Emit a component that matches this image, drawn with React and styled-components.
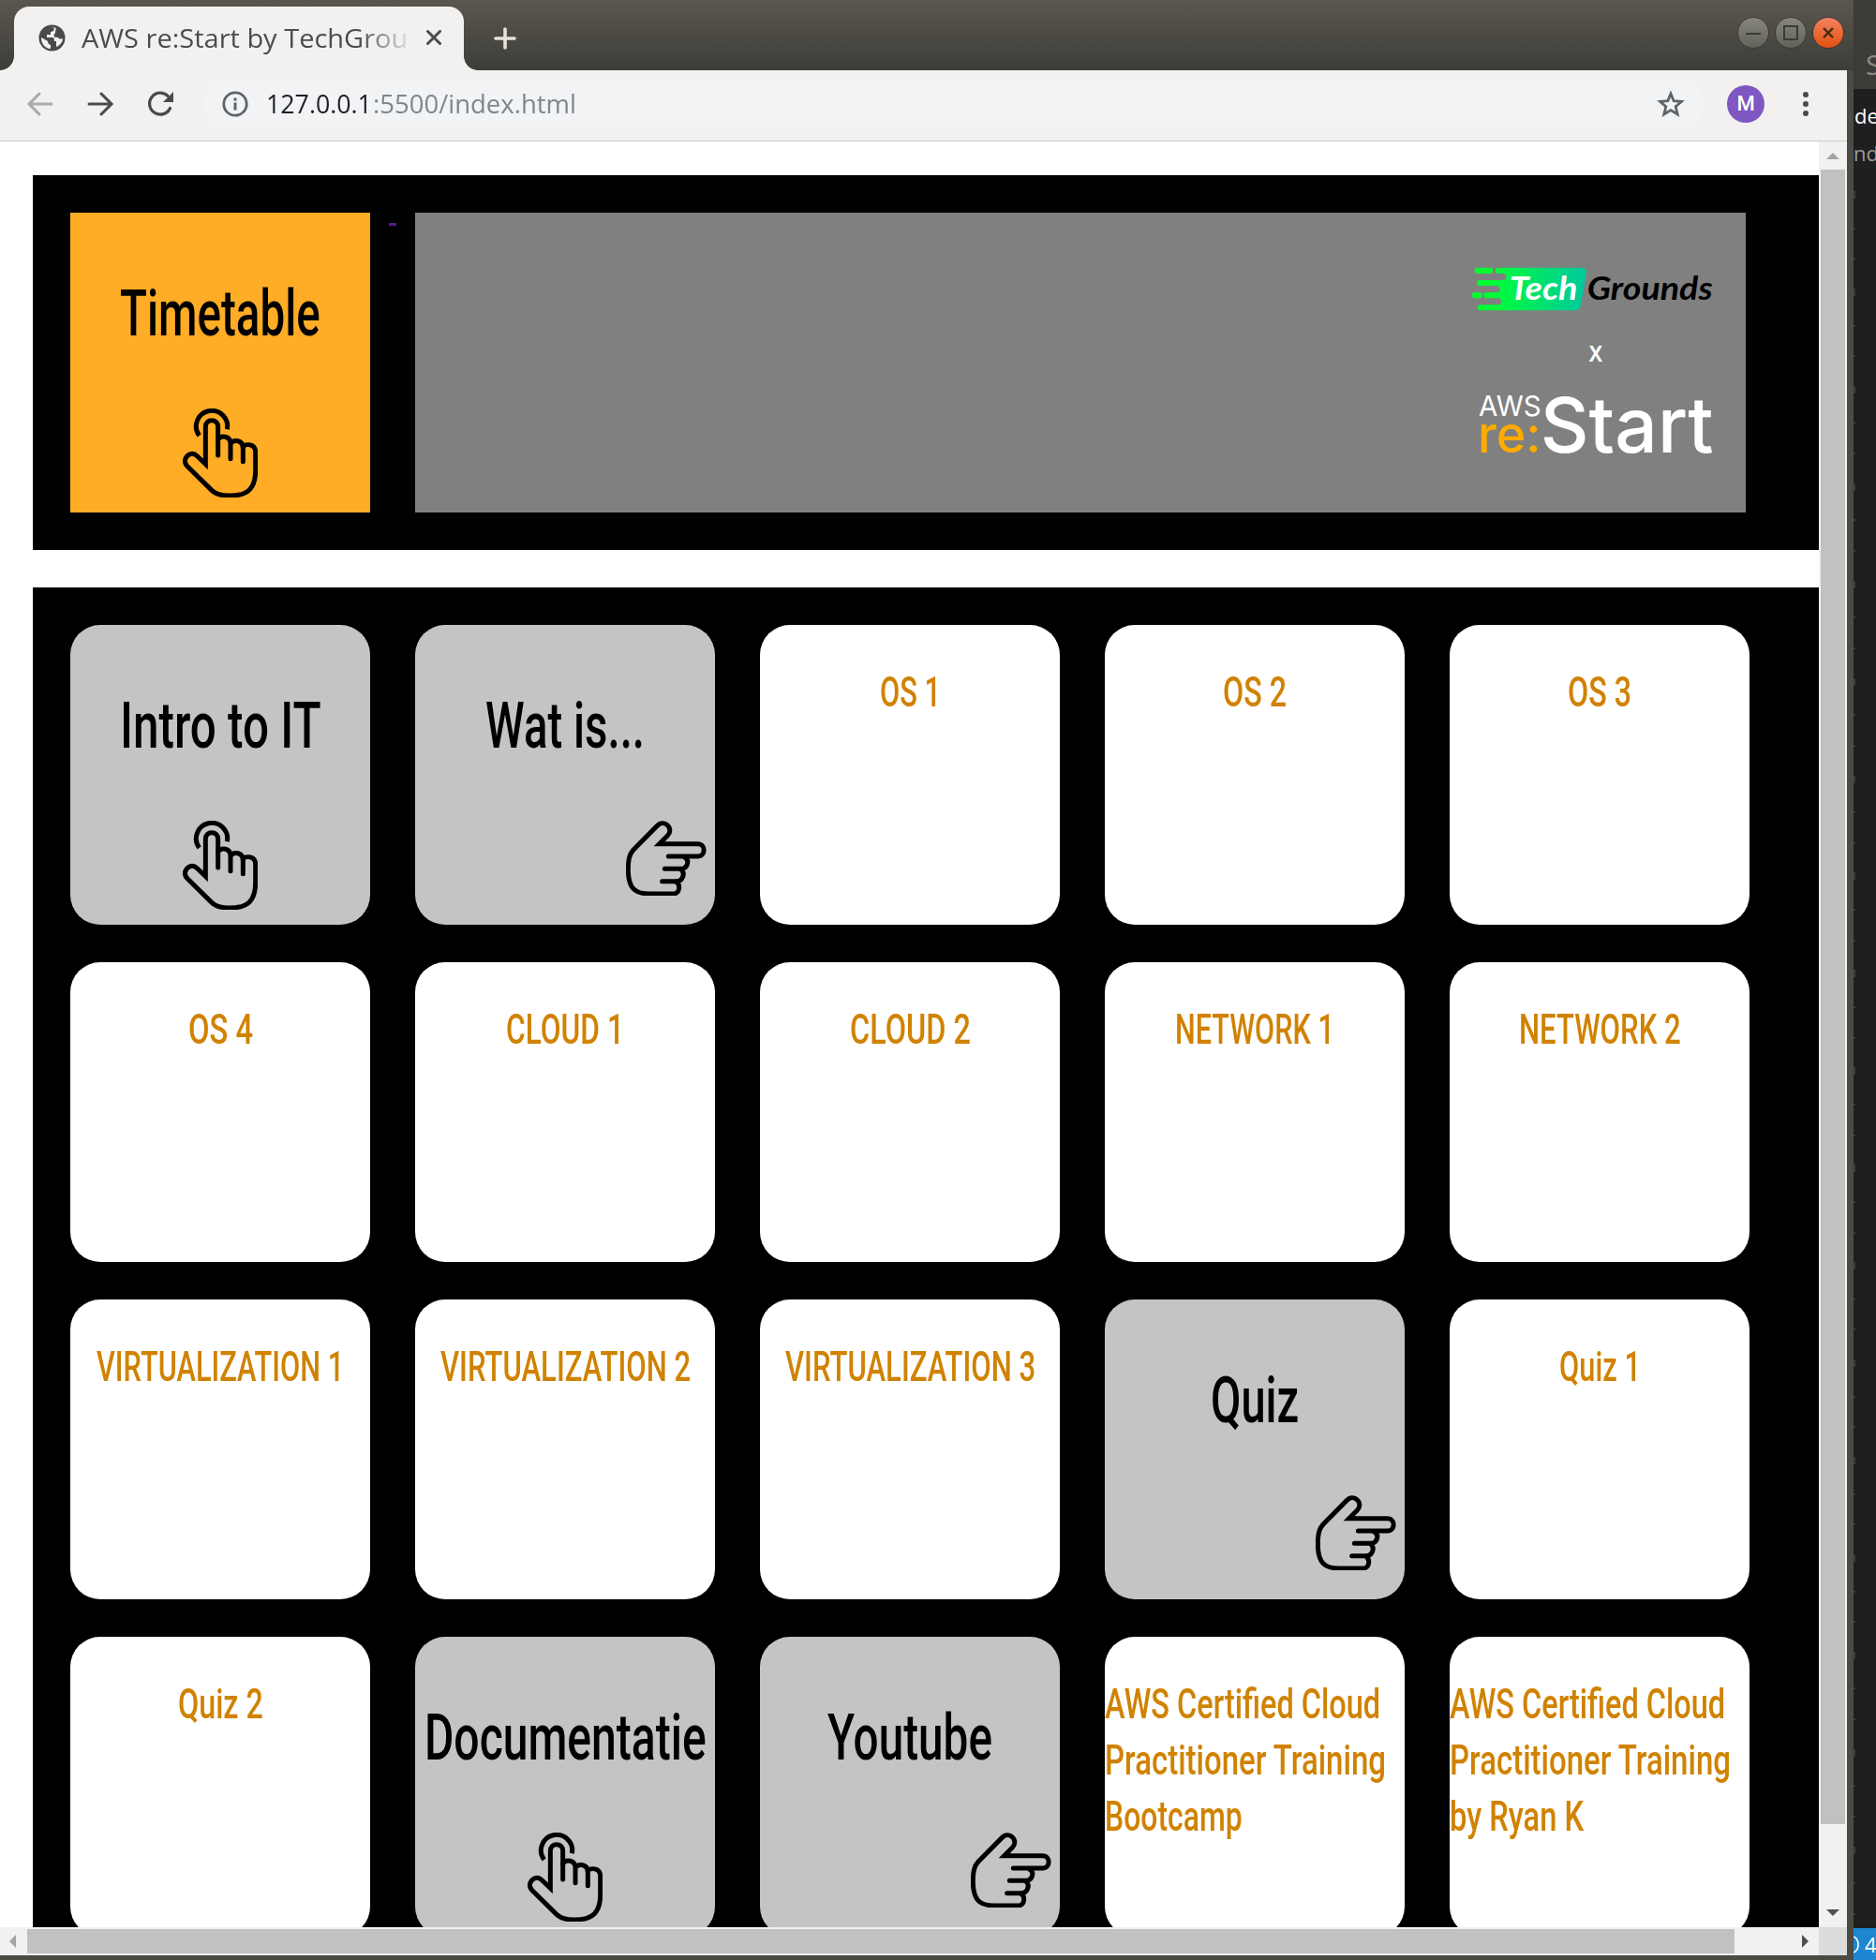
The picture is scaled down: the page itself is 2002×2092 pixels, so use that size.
import React, { useLayoutEffect, useRef, useState } from 'react';
import styled, { createGlobalStyle } from 'styled-components';

const GlobalStyle = createGlobalStyle`
  * { box-sizing: border-box; }
  html, body { margin: 0; padding: 0; overflow: hidden; }
  body { width: 2002px; height: 2092px; background: #1e1e1e; font-family: "Open Sans", "Noto Sans", sans-serif; }
  svg { display: block; flex: none; }
`;

/* ---------- text squeezed to a fixed width ---------- */

const FitBox = styled.span`
  display: block;
  flex: none;
  white-space: pre;
  width: ${(p) => p.$width}px;
`;

const FitInner = styled.span`
  display: inline-block;
  transform-origin: 0 50%;
`;

function FitText({ width, children }) {
  const ref = useRef(null);
  const [scale, setScale] = useState(1);
  useLayoutEffect(() => {
    setScale(width / ref.current.offsetWidth);
  }, [width]);
  return (
    <FitBox $width={width}>
      <FitInner ref={ref} style={{ transform: `scaleX(${scale})` }}>
        {children}
      </FitInner>
    </FitBox>
  );
}

/* ---------- desktop and window ---------- */

const Desktop = styled.div`
  display: flex;
  width: 2002px;
  height: 2092px;
  overflow: hidden;
`;

const Window = styled.div`
  display: flex;
  flex-direction: column;
  width: 1978px;
  height: 2092px;
  background: #4b4a43;
`;

const TitleBar = styled.header`
  display: flex;
  justify-content: space-between;
  height: 75px;
  background: linear-gradient(#5a574f, #3e3d38);
`;

const TabStrip = styled.div`
  display: flex;
  align-items: flex-end;
`;

const Flare = styled.div`
  width: 15px;
  height: 15px;
  background: radial-gradient(circle at ${(p) => (p.$side === 'left' ? '0 0' : '100% 0')}, transparent 14.5px, #f2f1ef 15.2px);
`;

const Tab = styled.div`
  display: flex;
  align-items: center;
  width: 480px;
  height: 68px;
  padding: 0 24px 2px 26px;
  border-radius: 16px 16px 0 0;
  background: #f2f1ef;
`;

const TabTitle = styled.div`
  width: 349px;
  margin: 0 19px 0 17px;
  font-size: 28px;
  line-height: 40px;
  color: #4c4c4c;
  mask-image: linear-gradient(to right, #000 296px, rgba(0, 0, 0, 0.12) 348px);
`;

const NewTab = styled.div`
  display: flex;
  align-items: center;
  height: 68px;
  margin-left: 17px;
`;

const WindowButtons = styled.div`
  display: flex;
  gap: 6px;
  padding: 18px 10px 0 0;
`;

const RoundButton = styled.div`
  display: flex;
  align-items: center;
  justify-content: center;
  width: 34px;
  height: 34px;
  border: 1px solid #3b3a35;
  border-radius: 50%;
  background: ${(p) => (p.$close ? 'linear-gradient(#f58260, #e2500f)' : 'linear-gradient(#87867e, #62615a)')};
`;

const Toolbar = styled.div`
  display: flex;
  align-items: center;
  width: 1971px;
  height: 76px;
  padding: 0 0 4px 28px;
  border-bottom: 1px solid #c9c9c9;
  background: #f2f1ef;
`;

const NavButtons = styled.div`
  display: flex;
  gap: 34px;
  width: 188px;
`;

const AddressBar = styled.div`
  display: flex;
  align-items: center;
  width: 1603px;
  height: 56px;
  padding: 0 20px 0 20px;
  border-radius: 28px;
  background: #f1f3f5;
  font-size: 27px;
  line-height: 40px;
`;

const Url = styled.div`
  display: flex;
  gap: 1px;
  flex: 1;
  margin-left: 18px;
  color: ${(p) => p.$color};
`;

const Host = styled.div`
  color: #1d1f22;
`;

const Path = styled.div`
  color: #80868b;
`;

const Avatar = styled.div`
  display: flex;
  align-items: center;
  justify-content: center;
  width: 40px;
  height: 40px;
  margin: 0 41px 0 24px;
  border-radius: 50%;
  background: #7e57c2;
  color: #fff;
  font: 500 22px Roboto, sans-serif;
`;

/* ---------- page ---------- */

const Viewport = styled.div`
  display: flex;
  width: 1971px;
  height: 1906px;
`;

const Page = styled.main`
  width: 1941px;
  height: 1906px;
  padding: 36px 0 0 35px;
  overflow: hidden;
  background: #fff;
`;

const Banner = styled.section`
  display: flex;
  height: 400px;
  padding: 40px;
  background: #000;
`;

const EmptyLink = styled.a`
  width: 8px;
  height: 14px;
  margin: 0 20px;
  border-bottom: 3px solid #551a8b;
`;

const LogoPanel = styled.div`
  display: flex;
  justify-content: flex-end;
  width: 1420px;
  height: 320px;
  padding: 23px 0 0;
  background: #808080;
`;

const Board = styled.section`
  display: grid;
  grid-template-columns: repeat(5, 320px);
  grid-auto-rows: 320px;
  gap: 40px 48px;
  margin-top: 40px;
  padding: 40px;
  background: #000;
`;

const Card = styled.article`
  display: flex;
  flex-direction: column;
  align-items: ${(p) => (p.$left ? 'flex-start' : 'center')};
  width: 320px;
  height: 320px;
  padding-top: ${(p) => (p.$small ? 42 : 58)}px;
  border-radius: ${(p) => (p.$square ? 0 : 32)}px;
  background: ${(p) => p.$bg};
`;

const Heading = styled.h2`
  margin: 0 0 51px;
  font: 500 68px/100px Roboto, sans-serif;
  color: #000;
`;

const Lesson = styled.h3`
  margin: 0;
  font: 500 45px/60px Roboto, sans-serif;
  color: #d08200;
`;

const PointSlot = styled.div`
  align-self: flex-end;
  margin-right: 9px;
`;

/* ---------- scrollbars ---------- */

const VerticalBar = styled.div`
  display: flex;
  flex-direction: column;
  align-items: center;
  width: 30px;
  height: 1906px;
  padding: 12px 0;
  background: #f1f1f1;
`;

const VerticalThumb = styled.div`
  width: 26px;
  height: 1766px;
  margin: 11px 0 91px;
  background: #c1c1c1;
`;

const BottomBar = styled.div`
  display: flex;
  align-items: center;
  width: 1971px;
  height: 30px;
  background: #f1f1f1;
`;

const HorizontalThumb = styled.div`
  width: 1822px;
  height: 26px;
  margin: 0 72px 0 12px;
  background: #c1c1c1;
`;

const Corner = styled.div`
  width: 30px;
  height: 30px;
  margin-left: auto;
  background: #dcdcdc;
`;

const ArrowPad = styled.div`
  width: 17px;
  padding-left: 10px;
`;

/* ---------- editor window behind ---------- */

const Behind = styled.aside`
  display: flex;
  flex-direction: column;
  width: 24px;
  height: 2092px;
  overflow: hidden;
  background: #1e1e1e;
`;

const Strip = styled.div`
  height: ${(p) => p.$h}px;
  padding: ${(p) => p.$pad || 0}px 0 0 ${(p) => p.$x || 0}px;
  overflow: hidden;
  white-space: nowrap;
  background: ${(p) => p.$bg};
  color: ${(p) => p.$color};
  font-size: ${(p) => p.$size || 24}px;
  line-height: 36px;
`;

const Specks = styled.div`
  display: flex;
  flex-direction: column;
  justify-content: space-between;
  height: 1868px;
  padding: 14px 0;
`;

const Speck = styled.i`
  width: 2px;
  height: ${(p) => p.$h}px;
  background: #3c3c3c;
`;

/* ---------- drawings ---------- */

const Tap = () => (
  <svg width="80" height="95.4" viewBox="45 47 240 286" fill="none" stroke="#000" strokeWidth="15">
    <path d="M98 134A50 50 0 1 1 187 114" />
    <path strokeLinecap="round" d="M158 197V106C158 78 118 78 118 106V225L91 199C76 185 60 194 54 207C50 217 53 225 60 232L138 309Q156 326 193 326C255 327 278 301 278 245V186C278 160 246 158 238 170" />
    <path strokeLinecap="round" d="M158 146C168 131 198 134 198 160V208M198 160C208 144 238 148 238 174V217" />
  </svg>
);

const Point = () => (
  <svg width="86" height="80.4" viewBox="84 77 258 241" fill="none" stroke="#000" strokeWidth="15">
    <path strokeLinecap="round" d="M220 191H314C340 191 340 151 314 151H191L217 125C230 112 224 96 214 89C204 82 192 85 184 93L108 170C95 184 91 200 91 237C92 290 110 311 160 311H236C257 311 260 280 243 271H200" />
    <path strokeLinecap="round" d="M272 194C290 205 280 231 260 231H208M260 233C276 246 264 271 246 271" />
  </svg>
);

const Logo = () => (
  <svg width="323" height="260" viewBox="0 0 969 780">
    <defs>
      <linearGradient id="brand" x1="93" x2="460" y1="0" y2="0" gradientUnits="userSpaceOnUse">
        <stop offset="0.15" stopColor="#00ff33" />
        <stop offset="1" stopColor="#00c8a0" />
      </linearGradient>
    </defs>
    <path fill="url(#brand)" d="M177 107H442Q460 107 459 123L441 228Q437 244 421 244H119A9 9 0 0 1 119 226H176A10 10 0 0 0 176 205H140A9 9 0 0 1 140 186H171A10 10 0 0 0 171 165H117A9 9 0 0 1 117 147H192A10 10 0 0 0 192 126H177A9 9 0 0 1 177 107Z" />
    <rect x="101" y="107" width="59" height="19" rx="9.5" fill="#00ff33" />
    <rect x="93" y="186" width="33" height="19" rx="9.5" fill="#00ff33" />
    <g fontFamily="Lato, sans-serif" fontWeight="700" fontStyle="italic" fontSize="102">
      <text x="212" y="210" fill="#fff" textLength="218" lengthAdjust="spacingAndGlyphs">Tech</text>
      <text x="461" y="210" fill="#000" textLength="402" lengthAdjust="spacingAndGlyphs">Grounds</text>
    </g>
    <g fontFamily="Inter, sans-serif" fontWeight="500">
      <text x="465" y="407" fontSize="90" fill="#fff" textLength="47" lengthAdjust="spacingAndGlyphs">x</text>
      <text x="114" y="583" fontSize="89" fontWeight="400" fill="#fff" textLength="200" lengthAdjust="spacingAndGlyphs">AWS</text>
      <text x="111" y="698" fontSize="163" fill="#ffab00" textLength="203" lengthAdjust="spacingAndGlyphs">re:</text>
      <text x="311" y="698" fontSize="245" fill="#fff" textLength="555" lengthAdjust="spacingAndGlyphs">Start</text>
    </g>
  </svg>
);

const Globe = () => (
  <svg width="29" height="29" viewBox="0 0 29 29">
    <circle cx="14.5" cy="14.5" r="14" fill="#4a4a4a" />
    <path fill="#f2f1ef" d="M13 3Q17 3 17 5Q16 8 13 8V11H9V14H15Q17 14 17 18H19V24C24 22 26 18 26 15Q24 16 22 15Q20 13 18 14Q15 12 18 9Q18 6 19 4Q16 2.800 13 3ZM3 14C3 21 7 25.500 13 26V22Q10 21 10 18Z" />
  </svg>
);

const Triangle = ({ d, w, h, fill = '#505050' }) => (
  <svg width={w} height={h} viewBox={`0 0 ${w} ${h}`}>
    <path d={d} fill={fill} />
  </svg>
);

const BackArrow = ({ color, forward }) => (
  <svg width="30" height="30" viewBox="0 0 30 30" fill="none" stroke={color} strokeWidth="3" strokeLinecap="round">
    <path d={forward ? 'M3 15H26M16 4L27 15L16 26' : 'M27 15H4M14 4L3 15L14 26'} />
  </svg>
);

/* ---------- content ---------- */

const GREY = '#c4c4c4';

const CARDS = [
  { title: 'Intro to IT', width: 215, icon: 'tap' },
  { title: 'Wat is...', width: 170, icon: 'point' },
  { lines: [['OS 1', 65]] },
  { lines: [['OS 2', 68]] },
  { lines: [['OS 3', 68]] },
  { lines: [['OS 4', 69]] },
  { lines: [['CLOUD 1', 126]] },
  { lines: [['CLOUD 2', 129]] },
  { lines: [['NETWORK 1', 170]] },
  { lines: [['NETWORK 2', 173]] },
  { lines: [['VIRTUALIZATION 1', 264]] },
  { lines: [['VIRTUALIZATION 2', 267]] },
  { lines: [['VIRTUALIZATION 3', 267]] },
  { title: 'Quiz', width: 94, icon: 'point' },
  { lines: [['Quiz 1', 87]] },
  { lines: [['Quiz 2', 91]] },
  { title: 'Documentatie', width: 301, icon: 'tap' },
  { title: 'Youtube', width: 176, icon: 'point' },
  { left: true, lines: [['AWS Certified Cloud', 294], ['Practitioner Training', 300], ['Bootcamp', 147]] },
  { left: true, lines: [['AWS Certified Cloud', 294], ['Practitioner Training', 300], ['by Ryan K', 143]] },
];

function TitleCard({ title, width, icon, bg = GREY, square }) {
  return (
    <Card $bg={bg} $square={square}>
      <Heading><FitText width={width}>{title}</FitText></Heading>
      {icon === 'tap' ? <Tap /> : <PointSlot><Point /></PointSlot>}
    </Card>
  );
}

function LessonCard({ lines, left }) {
  return (
    <Card $bg="#fff" $small $left={left}>
      <Lesson>
        {lines.map(([text, width]) => <FitText key={text} width={width}>{text}</FitText>)}
      </Lesson>
    </Card>
  );
}

export default function App() {
  return (
    <Desktop>
      <GlobalStyle />
      <Window>
        <TitleBar>
          <TabStrip>
            <Flare $side="left" />
            <Tab>
              <Globe />
              <TabTitle><FitText width={348}>AWS re:Start by TechGrou</FitText></TabTitle>
              <svg width="16" height="16" viewBox="0 0 16 16" stroke="#4c4c4c" strokeWidth="3" strokeLinecap="round">
                <path d="M1.500 1.500L14.500 14.500M14.500 1.500L1.500 14.500" />
              </svg>
            </Tab>
            <Flare $side="right" />
            <NewTab>
              <svg width="24" height="24" viewBox="0 0 24 24" stroke="#e8e2d8" strokeWidth="3.600" strokeLinecap="round">
                <path d="M12 2V22M2 12H22" />
              </svg>
            </NewTab>
          </TabStrip>
          <WindowButtons>
            <RoundButton>
              <svg width="16" height="16" stroke="#3b3a35" strokeWidth="2"><path d="M0 9H16" /></svg>
            </RoundButton>
            <RoundButton>
              <svg width="16" height="16" fill="none" stroke="#3b3a35" strokeWidth="2"><path d="M1 1H15V15H1Z" /></svg>
            </RoundButton>
            <RoundButton $close>
              <svg width="12" height="12" stroke="#3f2a12" strokeWidth="2.400"><path d="M1 1L11 11M11 1L1 11" /></svg>
            </RoundButton>
          </WindowButtons>
        </TitleBar>

        <Toolbar>
          <NavButtons>
            <BackArrow color="#a9a9a8" />
            <BackArrow color="#4a4a4a" forward />
            <svg width="30" height="30" viewBox="0 0 30 30">
              <path d="M25.500 19.500A11.500 11.500 0 1 1 23 6.300" fill="none" stroke="#4a4a4a" strokeWidth="3.200" strokeLinecap="round" />
              <path d="M29 2V13H18Z" fill="#4a4a4a" />
            </svg>
          </NavButtons>
          <AddressBar>
            <svg width="30" height="30" viewBox="0 0 30 30">
              <circle cx="15" cy="15" r="12.200" fill="none" stroke="#5f6368" strokeWidth="2.800" />
              <path d="M15 13.500V21.500M15 8.500V11.500" stroke="#5f6368" strokeWidth="3" />
            </svg>
            <Url>
              <Host><FitText width={113}>127.0.0.1</FitText></Host>
              <Path><FitText width={217}>:5500/index.html</FitText></Path>
            </Url>
            <svg width="32" height="32" viewBox="0 0 32 32" fill="none" stroke="#5f6368" strokeWidth="2.800">
              <path d="M16 5L19.100 12.600L27.500 13.300L21.200 18.800L23.200 27L16 22.600L8.800 27L10.800 18.800L4.500 13.300L12.900 12.600Z" />
            </svg>
          </AddressBar>
          <Avatar>M</Avatar>
          <svg width="8" height="28" fill="#4a4a4a" viewBox="0 0 8 28">
            <circle cx="3" cy="4" r="3" /><circle cx="3" cy="14" r="3" /><circle cx="3" cy="24" r="3" />
          </svg>
        </Toolbar>

        <Viewport>
          <Page>
            <Banner>
              <TitleCard title="Timetable" width={214} icon="tap" bg="#ffac26" square />
              <EmptyLink />
              <LogoPanel><Logo /></LogoPanel>
            </Banner>
            <Board>
              {CARDS.map((card, i) => (card.title ? <TitleCard key={i} {...card} /> : <LessonCard key={i} {...card} />))}
            </Board>
          </Page>
          <VerticalBar>
            <Triangle w={14} h={7} d="M0 7L7 0L14 7Z" fill="#a3a3a3" />
            <VerticalThumb />
            <Triangle w={14} h={7} d="M0 0H14L7 7Z" />
          </VerticalBar>
        </Viewport>

        <BottomBar>
          <ArrowPad><Triangle w={7} h={14} d="M7 0V14L0 7Z" fill="#a3a3a3" /></ArrowPad>
          <HorizontalThumb />
          <Triangle w={7} h={14} d="M0 0V14L7 7Z" />
          <Corner />
        </BottomBar>
      </Window>

      <Behind>
        <Strip $h={95} $pad={51} $x={13} $bg="#3c3b37" $color="#8c897f" $size={30}>S</Strip>
        <Strip $h={50} $pad={10} $x={1} $bg="#1f1f1f" $color="#fff" $size={22}>de</Strip>
        <Strip $h={45} $pad={8} $x={-1} $bg="#1f1f1f" $color="#9a9a9a" $size={22}>nd</Strip>
        <Specks>
          {Array.from({ length: 54 }, (_, i) => <Speck key={i} $h={i % 3 === 0 ? 8 : 2} />)}
        </Specks>
        <Strip $h={34} $bg="#1d86d1" $color="#fff" $size={23}>
          <svg width="24" height="34" viewBox="0 0 24 34">
            <path d="M0 9Q5 11 5 18Q5 24 0 26" fill="none" stroke="#fff" strokeWidth="1.600" />
            <text x="12" y="26" fill="#fff" fontSize="22" fontFamily="Open Sans, sans-serif">4</text>
          </svg>
        </Strip>
      </Behind>
    </Desktop>
  );
}
